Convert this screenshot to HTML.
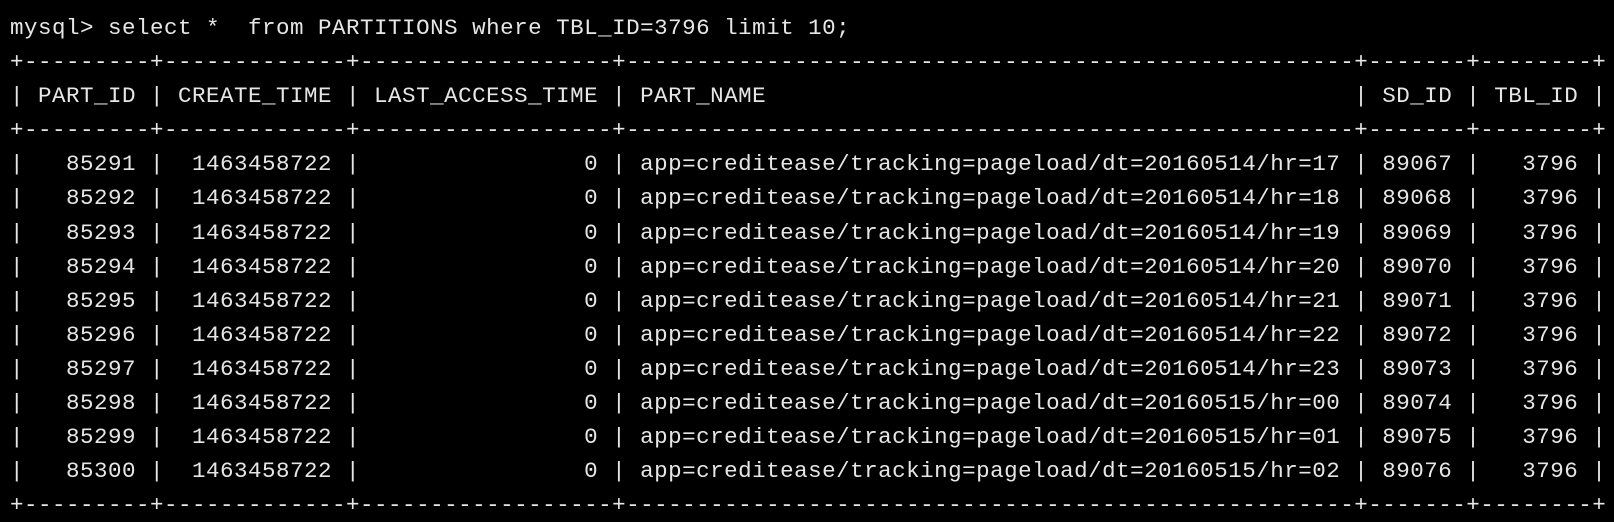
<!DOCTYPE html>
<html><head><meta charset="utf-8"><style>
html,body{margin:0;padding:0;background:#000;width:1614px;height:522px;overflow:hidden}
pre{margin:0;position:absolute;left:10px;top:11px;font-family:"Liberation Mono",monospace;font-size:22.5px;line-height:34.1px;color:#e6e6e6;letter-spacing:0.5px}
</style></head><body><pre>mysql&gt; select *  from PARTITIONS where TBL_ID=3796 limit 10;
+---------+-------------+------------------+----------------------------------------------------+-------+--------+
| PART_ID | CREATE_TIME | LAST_ACCESS_TIME | PART_NAME                                          | SD_ID | TBL_ID |
+---------+-------------+------------------+----------------------------------------------------+-------+--------+
|   85291 |  1463458722 |                0 | app=creditease/tracking=pageload/dt=20160514/hr=17 | 89067 |   3796 |
|   85292 |  1463458722 |                0 | app=creditease/tracking=pageload/dt=20160514/hr=18 | 89068 |   3796 |
|   85293 |  1463458722 |                0 | app=creditease/tracking=pageload/dt=20160514/hr=19 | 89069 |   3796 |
|   85294 |  1463458722 |                0 | app=creditease/tracking=pageload/dt=20160514/hr=20 | 89070 |   3796 |
|   85295 |  1463458722 |                0 | app=creditease/tracking=pageload/dt=20160514/hr=21 | 89071 |   3796 |
|   85296 |  1463458722 |                0 | app=creditease/tracking=pageload/dt=20160514/hr=22 | 89072 |   3796 |
|   85297 |  1463458722 |                0 | app=creditease/tracking=pageload/dt=20160514/hr=23 | 89073 |   3796 |
|   85298 |  1463458722 |                0 | app=creditease/tracking=pageload/dt=20160515/hr=00 | 89074 |   3796 |
|   85299 |  1463458722 |                0 | app=creditease/tracking=pageload/dt=20160515/hr=01 | 89075 |   3796 |
|   85300 |  1463458722 |                0 | app=creditease/tracking=pageload/dt=20160515/hr=02 | 89076 |   3796 |
+---------+-------------+------------------+----------------------------------------------------+-------+--------+</pre></body></html>
